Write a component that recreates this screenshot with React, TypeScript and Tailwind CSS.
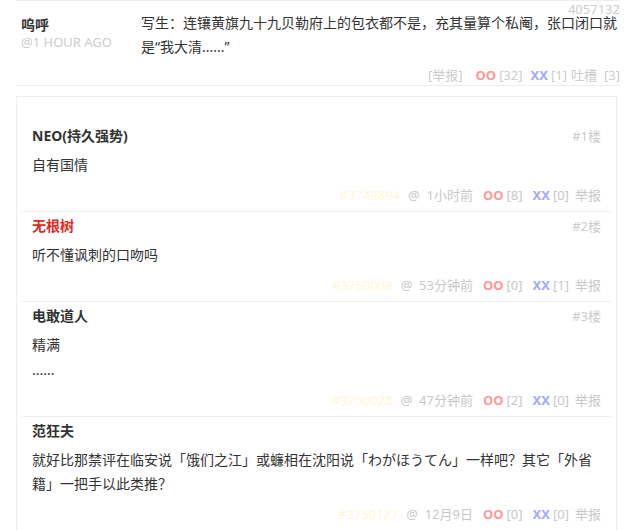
import type { ReactNode } from "react";

type Reply = {
  name: string;
  nameClass?: string;
  floor?: string;
  lines: ReactNode[];
  id: string;
  time: string;
  oo: number;
  xx: number;
  first?: boolean;
};

const replies: Reply[] = [
  {
    name: "NEO(持久强势)",
    floor: "#1楼",
    lines: ["自有国情"],
    id: "#3749894",
    time: "1小时前",
    oo: 8,
    xx: 0,
    first: true,
  },
  {
    name: "无根树",
    nameClass: "text-[#e02a1e] font-bold",
    floor: "#2楼",
    lines: ["听不懂讽刺的口吻吗"],
    id: "#3750008",
    time: "53分钟前",
    oo: 0,
    xx: 1,
  },
  {
    name: "电敢道人",
    floor: "#3楼",
    lines: ["精满", "......"],
    id: "#3750028",
    time: "47分钟前",
    oo: 2,
    xx: 0,
  },
  {
    name: "范狂夫",
    lines: [
      "就好比那禁评在临安说「饿们之江」或蠊相在沈阳说「わがほうてん」一样吧？其它「外省籍」一把手以此类推？",
    ],
    id: "#3750127",
    time: "12月9日",
    oo: 0,
    xx: 0,
  },
];

const ReplyRow = ({ r }: { r: Reply }) => (
  <div
    className={`border-b border-[#eee] pl-[10px] pr-[10px] pb-[7px] ${
      r.first ? "pt-[29px]" : "pt-[4px]"
    }`}
  >
    <div className="flex items-center justify-between leading-[20px]">
      <span className={`text-[14px] ${r.nameClass ?? "font-bold text-[#333]"}`}>
        {r.name}
      </span>
      {r.floor && <span className="text-[13px] text-[#ccc]">{r.floor}</span>}
    </div>
    <div className="mt-[7px] text-[14px] leading-[24px] text-[#333]">
      {r.lines.map((l, i) => (
        <p key={i} className={i > 0 ? "mt-[1px]" : ""}>
          {l}
        </p>
      ))}
    </div>
    <div className="mt-[9px] flex justify-end items-center text-[13px] leading-[18px] text-[#c8c8c8]">
      <span className="text-[#fff7d6]">{r.id}</span>
      <span className="ml-[8px]">@&nbsp; {r.time}</span>
      <span className="ml-[10px] font-bold text-[#ff9999]">OO</span>
      <span className="ml-[3px]">[{r.oo}]</span>
      <span className="ml-[10px] font-bold text-[#a8a8ff]">XX</span>
      <span className="ml-[3px]">[{r.xx}]</span>
      <span className="ml-[6px]">举报</span>
    </div>
  </div>
);

export default function App() {
  return (
    <div
      className="w-[641px] h-[530px] overflow-hidden bg-white text-[#333]"
      style={{ fontFamily: '"Noto Sans", "Noto Sans CJK SC", sans-serif' }}
    >
      <div className="ml-4 mr-[21px]">
        <div className="border-t border-b border-[#eee] pb-[1px]">
          <div className="text-right text-[13px] leading-[14px] h-[14px] text-[#ccc] mt-[1px]">
            4057132
          </div>
          <div className="flex -mt-[5px]">
            <div className="w-[125px] shrink-0 pl-[5px] pt-[5px]">
              <div className="text-[14px] font-bold leading-[18px] text-[#333]">呜呼</div>
              <div className="text-[13px] leading-[17px] text-[#ccc]">@1 HOUR AGO</div>
            </div>
            <div className="flex-1 text-[14px] leading-[24px] text-[#333]">
              写生：连镶黄旗九十九贝勒府上的包衣都不是，充其量算个私阉，张口闭口就是“我大清......”
            </div>
          </div>
          <div className="mt-[7px] flex justify-end items-center text-[13px] leading-[18px] text-[#ccc]">
            <span>[举报]</span>
            <span className="ml-[13px] font-bold text-[#ff9999]">OO</span>
            <span className="ml-[3px]">[32]</span>
            <span className="ml-[8px] font-bold text-[#a8a8ff]">XX</span>
            <span className="ml-[3px]">[1]</span>
            <span className="ml-[4px]">吐槽</span>
            <span className="ml-[7px]">[3]</span>
          </div>
        </div>
        <div className="mt-[10px] mr-[3px] border border-[#eee] px-[5px]">
          {replies.map((r) => (
            <ReplyRow key={r.id} r={r} />
          ))}
        </div>
      </div>
    </div>
  );
}
